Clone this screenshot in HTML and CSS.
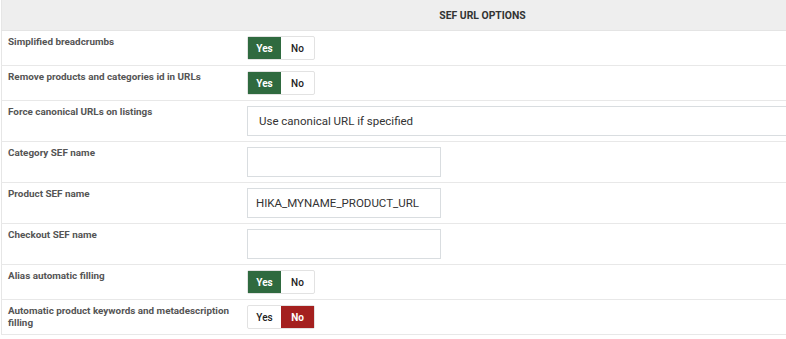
FILE: index.html
```html
<!DOCTYPE html>
<html lang="en">
<head>
<meta charset="UTF-8">
<title>SEF URL options</title>
<link rel="stylesheet" href="styles.css">
</head>
<body>

<table class="opciones">
    <thead>
        <tr>
            <th colspan="2">SEF URL OPTIONS</th>
        </tr>
    </thead>
    <tbody>
        <tr>
            <td class="etiqueta">Simplified breadcrumbs</td>
            <td>
                <div class="switch">
                    <span class="on si">Yes</span><span>No</span>
                </div>
            </td>
        </tr>
        <tr>
            <td class="etiqueta">Remove products and categories id in URLs</td>
            <td>
                <div class="switch">
                    <span class="on si">Yes</span><span>No</span>
                </div>
            </td>
        </tr>
        <tr>
            <td class="etiqueta">Force canonical URLs on listings</td>
            <td>
                <div class="campo select">Use canonical URL if specified</div>
            </td>
        </tr>
        <tr>
            <td class="etiqueta">Category SEF name</td>
            <td><div class="campo"></div></td>
        </tr>
        <tr>
            <td class="etiqueta">Product SEF name</td>
            <td><div class="campo">HIKA_MYNAME_PRODUCT_URL</div></td>
        </tr>
        <tr>
            <td class="etiqueta">Checkout SEF name</td>
            <td><div class="campo"></div></td>
        </tr>
        <tr>
            <td class="etiqueta">Alias automatic filling</td>
            <td>
                <div class="switch">
                    <span class="on si">Yes</span><span>No</span>
                </div>
            </td>
        </tr>
        <tr>
            <td class="etiqueta">Automatic product keywords and metadescription filling</td>
            <td>
                <div class="switch">
                    <span>Yes</span><span class="on no">No</span>
                </div>
            </td>
        </tr>
    </tbody>
</table>

</body>
</html>
```

FILE: styles.css
```css
html, body {
    overflow: hidden;
}

body {
    font-family: 'Roboto', 'Liberation Sans', sans-serif;
    margin: 0;
    padding: 0;
    background-color: #fff;
    color: #333;
}

.opciones {
    width: 962px;
    margin-left: 1px;
    border-collapse: collapse;
    border-left: 1px solid #e6e6e6;
}

.opciones th {
    background-color: #eeeeee;
    color: #333;
    font-size: 10.4px;
    font-weight: 700;
    height: 30px;
    padding: 0;
    text-align: center;
    border-bottom: 1px solid #e4e4e4;
}

.opciones td {
    border-bottom: 1px solid #e8e8e8;
    padding: 5px 0 5px 0;
    vertical-align: top;
}

.etiqueta {
    width: 229px;
    padding-left: 6px !important;
    padding-right: 10px !important;
    font-size: 9.9px;
    font-weight: 700;
    color: #555;
    line-height: 12px;
}

.switch {
    display: inline-flex;
    border: 1px solid #e2e2e2;
    border-radius: 2px;
    height: 24px;
    box-sizing: border-box;
}

.switch span {
    width: 33px;
    display: flex;
    align-items: center;
    justify-content: center;
    font-size: 10px;
    font-weight: 500;
    color: #222;
}

.switch .on {
    color: #fff;
    font-weight: 700;
}

.switch .si {
    background-color: #2f6a3f;
}

.switch .no {
    background-color: #a4201f;
}

.campo {
    width: 194px;
    height: 30px;
    box-sizing: border-box;
    border: 1px solid #d9dde0;
    font-size: 11.5px;
    color: #333;
    padding-left: 8px;
    display: flex;
    align-items: center;
}

.campo.select {
    width: 600px;
    padding-left: 11px;
}
```
